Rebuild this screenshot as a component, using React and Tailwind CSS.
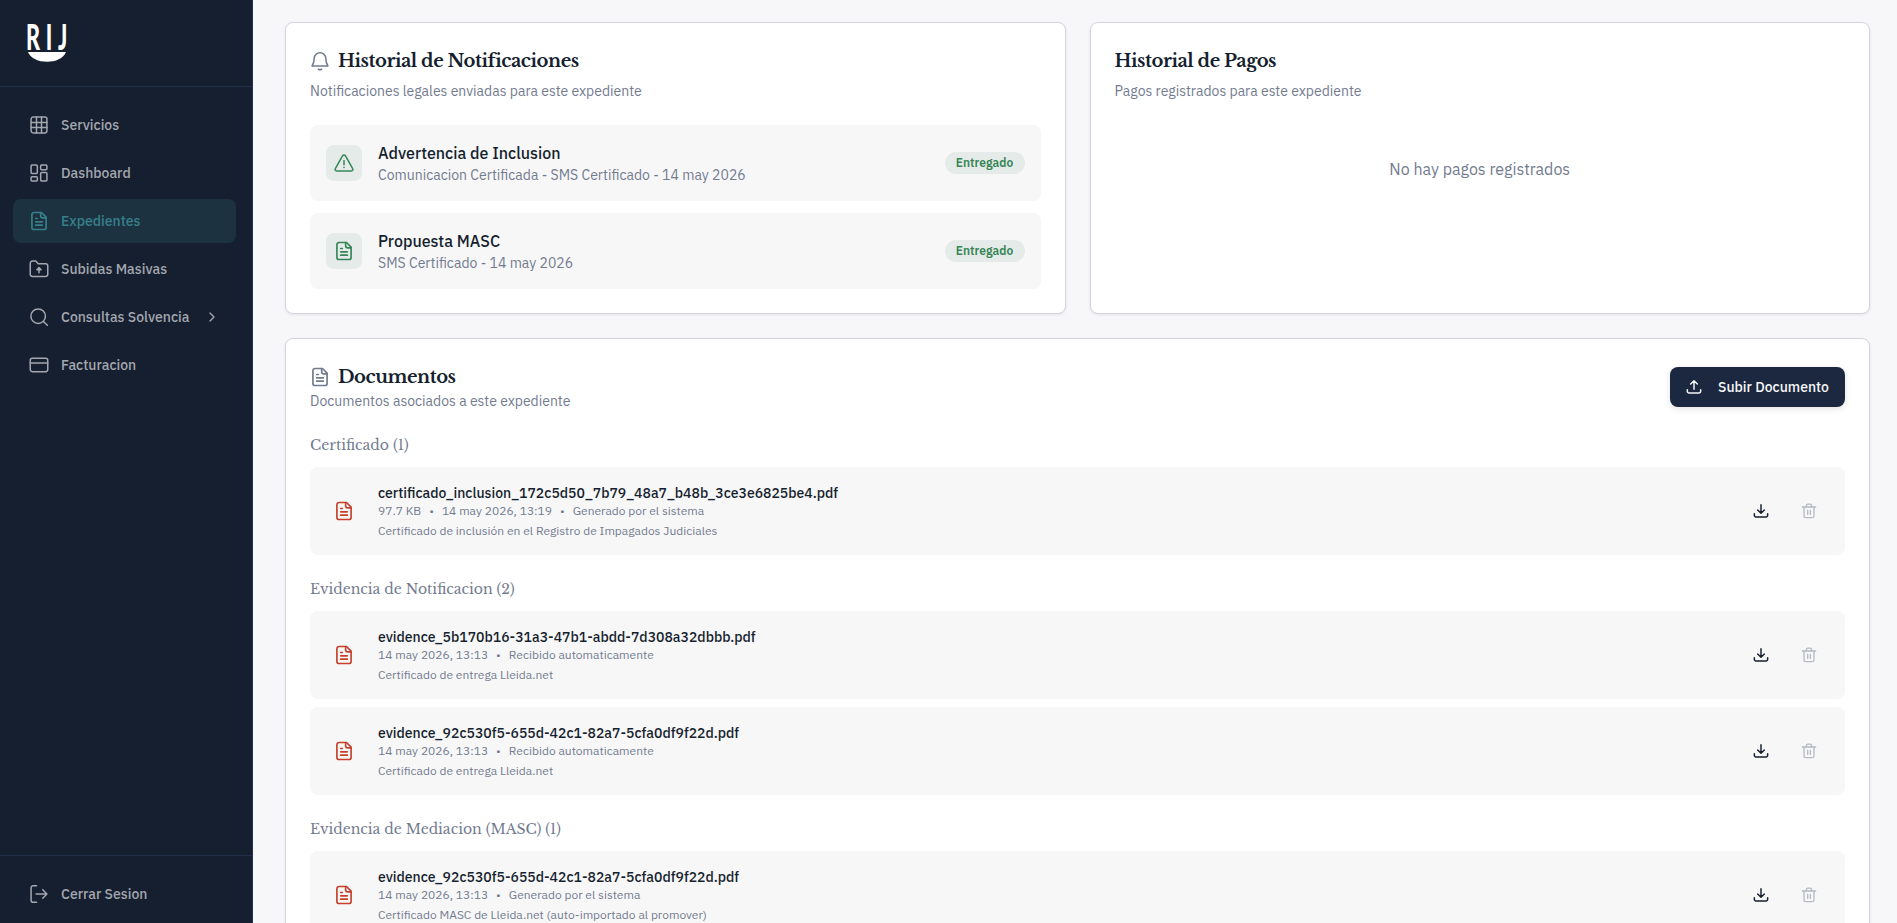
import React from 'react'

const Icono = ({ children, className, grosor = 1.8 }) => (
  <svg viewBox="0 0 24 24" fill="none" stroke="currentColor" strokeWidth={grosor} strokeLinecap="round" strokeLinejoin="round" className={className}>
    {children}
  </svg>
)

const IconoRejilla = ({ className }) => (
  <Icono className={className}>
    <rect x="2.5" y="2.5" width="19" height="19" rx="2.5" />
    <path d="M2.5 9h19M2.5 15h19M9 2.5v19M15 2.5v19" />
  </Icono>
)

const IconoDashboard = ({ className }) => (
  <Icono className={className}>
    <rect x="2.5" y="2.5" width="7.5" height="10" rx="1" />
    <rect x="14" y="2.5" width="7.5" height="5.5" rx="1" />
    <rect x="2.5" y="16.5" width="7.5" height="5" rx="1" />
    <rect x="14" y="11.5" width="7.5" height="10" rx="1" />
  </Icono>
)

const IconoDocumento = ({ className }) => (
  <Icono className={className} grosor={2}>
    <path d="M15 1.8H6A2.5 2.5 0 0 0 3.5 4.3v15.4A2.5 2.5 0 0 0 6 22.2h12a2.5 2.5 0 0 0 2.5-2.500V7.300z" />
    <path d="M14 1.800v4a2.500 2.500 0 0 0 2.500 2.500h4M8 9h2M8 13h8M8 17h8" />
  </Icono>
)

const IconoCarpeta = ({ className }) => (
  <Icono className={className}>
    <path d="M1.500 5a2.500 2.500 0 0 1 2.500-2.500h4.200l2.800 3.300h9a2.500 2.500 0 0 1 2.500 2.500V18.500A2.500 2.500 0 0 1 20 21H4a2.500 2.500 0 0 1-2.500-2.500z" />
    <path d="M12 16.500v-5M9.500 12.800 12 10.300l2.500 2.500z" />
  </Icono>
)

const IconoLupa = ({ className }) => (
  <Icono className={className}>
    <circle cx="11" cy="11" r="8.700" />
    <path d="m17.300 17.300 4.700 4.700" />
  </Icono>
)

const IconoTarjeta = ({ className }) => (
  <Icono className={className}>
    <rect x="1.500" y="4" width="21" height="16" rx="2.500" />
    <path d="M1.500 9.500h21" />
  </Icono>
)

const IconoSalir = ({ className }) => (
  <Icono className={className}>
    <path d="M9 2H5a2.500 2.500 0 0 0-2.500 2.500v15A2.500 2.500 0 0 0 5 22h4M8.500 12h13M16.500 7l5 5-5 5" />
  </Icono>
)

const IconoCampana = ({ className }) => (
  <Icono className={className}>
    <path d="M12 2a7 7 0 0 0-7 7c0 4.500-1 6.500-2.500 9h19C20 15.500 19 13.500 19 9a7 7 0 0 0-7-7zM10 21.800c1 .8 3 .8 4 0" />
  </Icono>
)

const IconoAlerta = ({ className }) => (
  <Icono className={className}>
    <path d="M10.400 3.200 1.600 18.700A1.800 1.800 0 0 0 3.200 21.500h17.600a1.800 1.800 0 0 0 1.600-2.800L13.600 3.200a1.850 1.850 0 0 0-3.200 0zM12 9v5M12 17.200v.3" />
  </Icono>
)

const IconoSubir = ({ className }) => (
  <Icono className={className} grosor={2.2}>
    <path d="M2 16v2.500A2.500 2.500 0 0 0 4.500 21h15a2.500 2.500 0 0 0 2.500-2.500V16M12 15.500V3M7 7.500 12 2.500l5 5" />
  </Icono>
)

const IconoBajar = ({ className }) => (
  <Icono className={className} grosor={2.2}>
    <path d="M2 16v2.500A2.500 2.500 0 0 0 4.500 21h15a2.500 2.500 0 0 0 2.500-2.500V16M12 2.500V15M7 10.500l5 5 5-5" />
  </Icono>
)

const IconoPapelera = ({ className }) => (
  <Icono className={className} grosor={2}>
    <path d="M2 6h20M4.500 6v13.500A2.500 2.500 0 0 0 7 22h10a2.500 2.500 0 0 0 2.500-2.500V6M8 6V4a2.300 2.300 0 0 1 2.300-2.300h3.400A2.300 2.300 0 0 1 16 4v2M10 11v6M14 11v6" />
  </Icono>
)

const menu = [
  { nombre: 'Servicios', icono: IconoRejilla },
  { nombre: 'Dashboard', icono: IconoDashboard },
  { nombre: 'Expedientes', icono: IconoDocumento, activo: true },
  { nombre: 'Subidas Masivas', icono: IconoCarpeta },
  { nombre: 'Consultas Solvencia', icono: IconoLupa, submenu: true },
  { nombre: 'Facturacion', icono: IconoTarjeta }
]

const notificaciones = [
  { titulo: 'Advertencia de Inclusion', detalle: 'Comunicacion Certificada - SMS Certificado - 14 may 2026', icono: IconoAlerta },
  { titulo: 'Propuesta MASC', detalle: 'SMS Certificado - 14 may 2026', icono: IconoDocumento }
]

const grupos = [
  {
    titulo: 'Certificado (1)',
    docs: [
      {
        nombre: 'certificado_inclusion_172c5d50_7b79_48a7_b48b_3ce3e6825be4.pdf',
        meta: ['97.7 KB', '14 may 2026, 13:19', 'Generado por el sistema'],
        descripcion: 'Certificado de inclusión en el Registro de Impagados Judiciales'
      }
    ]
  },
  {
    titulo: 'Evidencia de Notificacion (2)',
    docs: [
      {
        nombre: 'evidence_5b170b16-31a3-47b1-abdd-7d308a32dbbb.pdf',
        meta: ['14 may 2026, 13:13', 'Recibido automaticamente'],
        descripcion: 'Certificado de entrega Lleida.net'
      },
      {
        nombre: 'evidence_92c530f5-655d-42c1-82a7-5cfa0df9f22d.pdf',
        meta: ['14 may 2026, 13:13', 'Recibido automaticamente'],
        descripcion: 'Certificado de entrega Lleida.net'
      }
    ]
  },
  {
    titulo: 'Evidencia de Mediacion (MASC) (1)',
    docs: [
      {
        nombre: 'evidence_92c530f5-655d-42c1-82a7-5cfa0df9f22d.pdf',
        meta: ['14 may 2026, 13:13', 'Generado por el sistema'],
        descripcion: 'Certificado MASC de Lleida.net (auto-importado al promover)'
      }
    ]
  }
]

const Logo = () => (
  <div className="w-10">
    <div className="-ml-px flex h-[26px] w-[69px] origin-left scale-x-[0.6] items-center justify-between whitespace-nowrap font-['Lato','Liberation_Sans',sans-serif] text-[36px] font-black leading-[26px] text-white">
      <span>R</span>
      <span>I</span>
      <span>J</span>
    </div>
    <svg viewBox="0 0 40 10" className="mt-[3px] h-[10px] w-10 fill-white">
      <path d="M1 0h38C34 13 6 13 1 0z" />
    </svg>
  </div>
)

const Sidebar = () => (
  <aside className="flex w-[253px] shrink-0 flex-col border-r border-[#22304a] bg-[#161f2f] text-[#a3a7af]">
    <div className="h-[87px] border-b border-[#22304a] px-[27px] pt-[23px]">
      <Logo />
    </div>
    <nav className="flex flex-1 flex-col gap-1 px-[13px] pt-4">
      {menu.map(({ nombre, icono: Ico, activo, submenu }) => (
        <a
          key={nombre}
          className={`flex h-11 w-[223px] items-center rounded-lg px-4 text-sm font-medium ${activo ? 'bg-[#1d3240] text-[#35808a]' : ''}`}
        >
          <Ico className="mr-3 size-5 shrink-0" />
          <span className="flex-1 whitespace-nowrap">{nombre}</span>
          {submenu && (
            <Icono className="size-4" grosor={2}>
              <path d="m9 6 6 6-6 6" />
            </Icono>
          )}
        </a>
      ))}
    </nav>
    <div className="h-[68px] border-t border-[#22304a] px-[13px] pt-4">
      <a className="flex h-11 items-center px-4 text-sm font-medium">
        <IconoSalir className="mr-3 size-5" />
        Cerrar Sesion
      </a>
    </div>
  </aside>
)

const Tarjeta = ({ className, children }) => (
  <section className={`rounded-lg border border-[#d3d5de] bg-white px-6 shadow-[0_1px_3px_rgba(22,31,47,0.08)] ${className}`}>{children}</section>
)

const Titulo = ({ children }) => (
  <h2 className="font-['Libre_Baskerville','Liberation_Serif',serif] text-lg font-bold leading-7 tracking-tight text-[#161f2f]">{children}</h2>
)

const Documento = ({ doc }) => (
  <div className="flex h-[88px] items-center rounded-lg bg-[#f7f7f7] px-6">
    <IconoDocumento className="size-5 shrink-0 text-[#c5412d]" />
    <div className="ml-6 flex-1">
      <p className="text-sm font-medium text-[#161f2f]">{doc.nombre}</p>
      <div className="flex gap-2 text-xs text-[#737b90]">
        {doc.meta.map((m, i) => (
          <React.Fragment key={m}>
            {i > 0 && <span>•</span>}
            <span>{m}</span>
          </React.Fragment>
        ))}
      </div>
      <p className="mt-1 text-xs text-[#737b90]">{doc.descripcion}</p>
    </div>
    <button className="mr-8 text-[#161f2f]">
      <IconoBajar className="size-4" />
    </button>
    <button className="mr-1 text-[#b5b9c3]">
      <IconoPapelera className="size-4" />
    </button>
  </div>
)

const App = () => {
  return (
    <div className="flex h-[923px] overflow-hidden bg-[#f7f7f9] font-['IBM_Plex_Sans','Roboto',sans-serif]">
      <Sidebar />
      <main className="flex-1 overflow-hidden pl-8 pr-[27px] pt-[22px]">
        <div className="grid grid-cols-2 gap-6">
          <Tarjeta className="h-[292px]">
            <div className="mt-6 flex items-center gap-2">
              <IconoCampana className="size-5 text-[#737b90]" />
              <Titulo>Historial de Notificaciones</Titulo>
            </div>
            <p className="mt-1.5 text-sm text-[#737b90]">Notificaciones legales enviadas para este expediente</p>
            <div className="mt-6 space-y-3">
              {notificaciones.map(({ titulo, detalle, icono: Ico }) => (
                <div key={titulo} className="flex h-[76px] items-center rounded-lg bg-[#f7f7f7] px-4">
                  <div className="flex size-9 items-center justify-center rounded-lg bg-[#e4ebe8] text-[#378557]">
                    <Ico className="size-5" />
                  </div>
                  <div className="ml-4 flex-1">
                    <p className="text-base font-medium text-[#161f2f]">{titulo}</p>
                    <p className="text-sm text-[#737b90]">{detalle}</p>
                  </div>
                  <span className="flex h-[22px] w-20 items-center justify-center rounded-full bg-[#e4ebe8] text-xs font-semibold text-[#378557]">
                    Entregado
                  </span>
                </div>
              ))}
            </div>
          </Tarjeta>

          <Tarjeta className="h-[292px]">
            <div className="mt-6">
              <Titulo>Historial de Pagos</Titulo>
            </div>
            <p className="mt-1.5 text-sm text-[#737b90]">Pagos registrados para este expediente</p>
            <p className="mt-14 text-center text-base text-[#737b90]">No hay pagos registrados</p>
          </Tarjeta>
        </div>

        <Tarjeta className="mt-6 h-[700px]">
          <div className="mt-6 flex items-start justify-between">
            <div>
              <div className="flex items-center gap-2">
                <IconoDocumento className="size-5 text-[#737b90]" />
                <Titulo>Documentos</Titulo>
              </div>
              <p className="text-sm text-[#737b90]">Documentos asociados a este expediente</p>
            </div>
            <button className="mt-1 flex h-10 w-[175px] items-center rounded-lg bg-[#1b283f] px-4 text-sm font-medium text-[#f7f7f9] shadow-[0_2px_6px_rgba(22,31,47,0.12)]">
              <IconoSubir className="mr-4 size-4" />
              Subir Documento
            </button>
          </div>
          <div className="mt-6 space-y-6">
            {grupos.map(grupo => (
              <div key={grupo.titulo}>
                <h3 className="font-['Libre_Baskerville','Liberation_Serif',serif] text-sm text-[#737b90]">{grupo.titulo}</h3>
                <div className="mt-3 space-y-2">
                  {grupo.docs.map(doc => (
                    <Documento key={doc.nombre} doc={doc} />
                  ))}
                </div>
              </div>
            ))}
          </div>
        </Tarjeta>
      </main>
    </div>
  )
}

export default App
